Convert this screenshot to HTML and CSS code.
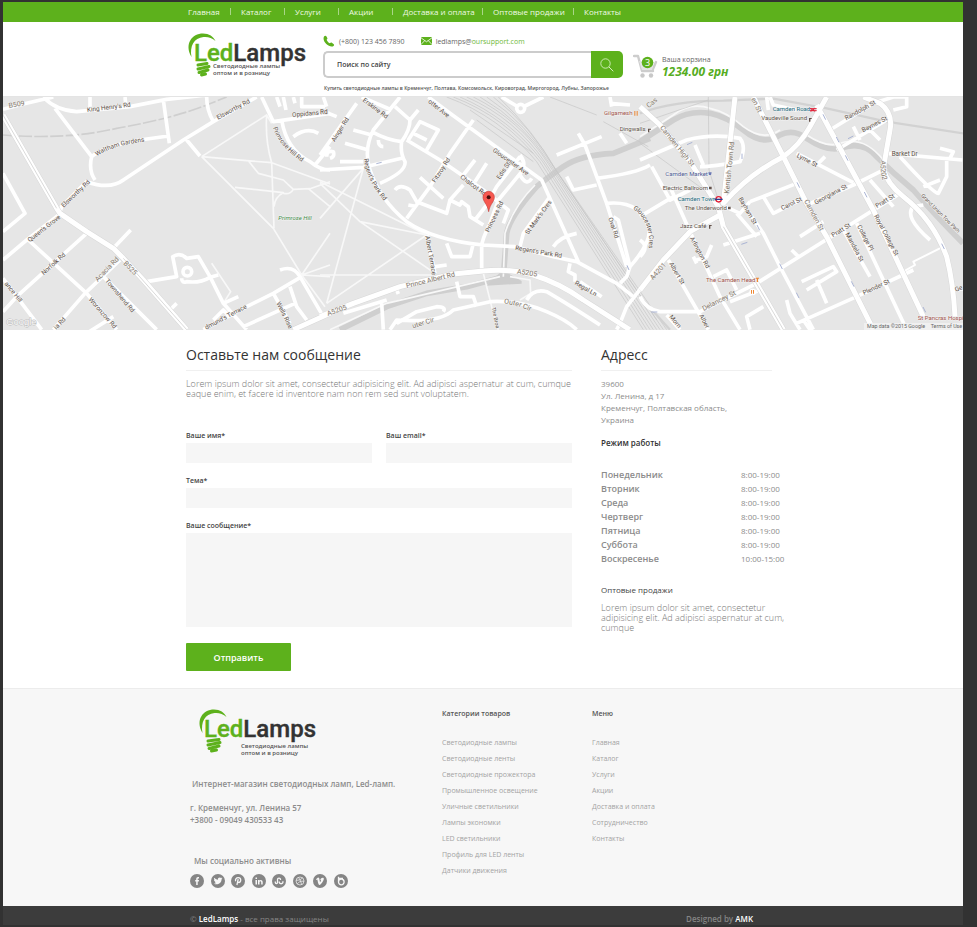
FILE: index.html
```html
<!DOCTYPE html>
<html lang="ru">
<head>
<meta charset="utf-8">
<title>LedLamps</title>
<link rel="stylesheet" href="styles.css">
</head>
<body>
<div class="site">
  <nav class="topnav">
    <ul class="wrap topnav-list">
      <li><a href="#">Главная</a></li>
      <li><a href="#">Каталог</a></li>
      <li><a href="#">Услуги</a></li>
      <li><a href="#">Акции</a></li>
      <li><a href="#">Доставка и оплата</a></li>
      <li><a href="#">Оптовые продажи</a></li>
      <li><a href="#">Контакты</a></li>
    </ul>
  </nav>

  <header class="header">
    <div class="wrap header-row">
      <a class="logo" href="#">
        <svg width="122" height="48" viewBox="0 0 122 48">
          <path fill="#5db11c" d="M4.500 24C-3 11 5 .5 16 .5c6 0 10.500 3 12.500 7.500C25 5 21 3.500 16.500 4 7 5 2.500 13 4.500 24z"/>
          <g fill="none" stroke="#5db11c" stroke-width="3" stroke-linecap="round"><path d="M11 32l9-1.500M11 36l11-2.500M12 39.500l9-2.500M14.500 42l4-1"/></g>
          <text class="logo-text" x="7" y="28"><tspan class="logo-led">Led</tspan>Lamps</text>
          <text class="logo-tag" x="26" y="35">Светодиодные лампы</text>
          <text class="logo-tag" x="26" y="42">оптом и в розницу</text>
        </svg>
      </a>
      <div class="header-mid">
        <div class="contacts">
          <span class="contact"><svg width="12" height="12" viewBox="0 0 12 12"><path fill="#5db11c" d="M1 1.500C2 .5 3 .6 3.500 1.500l.9 1.700c.3.700-.2 1-.8 1.500.6 1.600 1.700 2.800 3.300 3.600.6-.6 1-1 1.600-.7l2 1.300c.8.600.8 1.400 0 2C7 13.500-1.500 6.500 1 1.500z"/></svg>(+800) 123 456 7890</span>
          <span class="contact"><svg width="11" height="8" viewBox="0 0 11 8"><rect width="11" height="8" rx="1" fill="#5db11c"/><path d="M0 .8l5.500 4L11 .8M0 7.500l3.800-4M11 7.500l-3.800-4" fill="none" stroke="#fff" stroke-width=".8"/></svg><span>ledlamps@<a href="#">oursupport.com</a></span></span>
        </div>
        <form class="search">
          <input type="search" aria-label="Поиск по сайту" placeholder="Поиск по сайту">
          <button type="button" aria-label="Найти"><svg width="14" height="14" viewBox="0 0 14 14"><circle cx="5.500" cy="5.500" r="4.700" fill="none" stroke="#d6efc2" stroke-width=".9"/><path d="M9 9l4.300 4.300" stroke="#d6efc2" stroke-width="1"/></svg></button>
        </form>
        <p class="cities">Купить светодиодные лампы в Кременчуг, Полтава, Комсомольск, Кировоград, Миргогород, Лубны, Запорожье</p>
      </div>
      <div class="cart">
        <svg width="25" height="24" viewBox="0 0 25 24">
          <path d="M1 2h4l4 15h11M23 8l-3 7" fill="none" stroke="#cdcdcd" stroke-width="2.400" stroke-linejoin="round" stroke-linecap="round"/>
          <path d="M6 7l15 1-2 8H9z" fill="#e4e4e4"/>
          <circle cx="9.500" cy="21.500" r="2.200" fill="#c8c8c8"/><circle cx="18" cy="21.500" r="2.200" fill="#c8c8c8"/>
          <circle cx="14.500" cy="8.500" r="5.800" fill="#5db11c"/>
          <text class="cart-count" x="14.500" y="12">3</text>
        </svg>
        <div class="cart-info">
          <div class="cart-label">Ваша корзина</div>
          <div class="cart-sum">1234.00 грн</div>
        </div>
      </div>
    </div>
  </header>

  <section class="map">
    <svg viewBox="0 0 2880 699" preserveAspectRatio="xMidYMid slice" role="img" aria-label="Карта">
      <rect width="2880" height="699" fill="#e6e6e6"/>

      <!-- water -->
      <g class="canal">
        <path d="M1941 124L1831 169Q1731 174 1681 209Q1631 244 1601 269Q1521 359 1511 409L1501 539L1391 569L1271 589L1151 629L1011 698"/>
        <path d="M1911 134L2011 69Q2061 39 2121 49Q2171 59 2221 99Q2281 149 2331 114Q2371 94 2411 124Q2471 164 2511 154Q2581 129 2621 179Q2671 229 2731 279Q2791 349 2880 439"/>
      </g>
      <path d="M1470 545L1500 520L1556 552L1556 560L1450 566z" fill="#cdcdcd"/>

      <!-- park paths -->
      <g class="path" transform="translate(-9 -21)">
        <path d="M605 200L800 75L815 100M605 200L820 415L905 555M605 200L740 212L815 218L990 282M800 75Q795 150 815 218L822 415M745 212L775 250L850 270L880 298L930 296L990 275M705 292L850 308Q825 320 822 350M880 298Q870 315 850 310M925 296L990 350M905 555L990 430M905 555L990 525M905 555L990 560M905 555L975 650M635 520L692 605L670 640"/>
      </g>
      <g class="path" transform="translate(951 -21)">
        <path d="M0 275L320 435M130 235L0 385M0 280L120 395L345 550M320 435L120 395M320 435L20 640M130 235L20 640M0 555L345 555M485 530L515 650L535 719M550 560L555 430Q580 350 645 285M30 719L200 640L540 560M570 560L630 570L632 610L600 630"/>
      </g>
      <g class="path" transform="translate(1911 -21)"><path d="M0 140L100 75Q150 35 210 55Q260 65 310 110Q370 155 420 120M500 135Q560 175 600 160Q670 135 730 210"/></g>

      <!-- railways -->
      <g class="rail" transform="translate(951 -21)">
        <path d="M380 21Q540 80 650 215L970 719"/><path d="M400 21Q555 80 660 215L980 719"/><path d="M420 21Q570 85 668 215L990 719"/><path d="M440 21Q585 85 676 218L1000 719"/><path d="M460 21Q600 90 684 220L1010 719"/><path d="M480 21Q610 95 692 225L1020 719"/><path d="M500 21Q620 100 700 230L1030 719"/><path d="M520 21Q630 105 708 240L1040 719"/><path d="M535 21Q640 120 714 250L1010 690"/><path d="M450 60L640 190"/><path d="M470 90L640 215"/><path d="M690 21L830 75M850 95L985 170"/>
      </g>
      <g transform="translate(1911 -21)">
        <path class="track" d="M0 70Q100 32 250 32L400 26L560 55L740 95L980 132"/>
        <path class="rail" d="M205 21L207 240L235 330M0 160L220 320M0 100L205 30"/>
        <path class="track" d="M0 620L90 719"/>
      </g>
      <path class="rail-dash" d="M0 114Q191 129 341 94Q511 64 611 24L671 0"/>

      <!-- streets -->
      <g class="street" transform="translate(-9 -21)">
        <path d="M9 58L70 42L160 21M130 21Q165 60 230 65L390 50L500 28L620 15M165 55L275 200Q265 240 285 270M490 30L508 160M275 200Q310 170 420 150L505 138M180 365L185 350L260 275Q330 300 370 270L550 150L640 95L770 21M560 150L600 198M620 21Q620 60 640 95M9 250L75 370L9 425M180 372L80 450L9 510M85 450L260 610L350 719M260 430L50 620L9 665M340 475L392 420M9 565L125 719M360 510L255 610L160 719M310 560L470 719M260 730L340 680M440 575L530 560L518 500Q540 485 560 505L595 500L630 560L670 640L740 719M545 565Q545 580 560 575Q600 580 630 562L655 555M670 640L715 620M640 690L670 660L690 680M510 660L530 640M610 719L740 650L820 610L905 560M730 710L885 640M820 610L870 700M870 590L890 650L920 690M840 540Q880 525 900 560L970 680M785 21L820 95L990 70M845 90Q860 180 930 215Q960 240 990 240M880 140Q920 110 955 130M945 225L990 170M905 21L905 50L975 50M830 21L840 50M850 21L858 60M885 40L880 21M270 21L270 60M375 21L378 50"/>
        <circle cx="562" cy="545" r="13"/>
      </g>
      <g class="street" transform="translate(951 -21)">
        <path d="M325 21L390 70L665 270L775 515M240 21L160 120Q130 180 150 240Q180 330 260 395Q340 450 490 465L585 470L700 500L770 515L890 580L940 620M110 40L0 195M0 60L50 80M125 21L215 60M75 160L145 180M60 215L130 215M100 120L155 135M0 240L130 232L245 205M20 200Q20 180 40 185Q45 200 30 205M155 125Q200 150 245 155Q270 120 270 90L225 50M245 155Q240 190 255 215Q260 245 180 280M175 150q0 20 15 20M265 150L300 95L355 120L320 180M270 90L295 60M280 130L320 150M260 150L360 210L490 300L565 360L550 400M460 90L390 190L330 290L260 385M225 300Q240 280 270 300L290 335L380 370L390 330L430 285M300 262L370 325M265 345L290 350M465 210L430 255M500 220L465 275M600 200L530 290L500 345L465 390M390 330L420 345L425 335L445 350L450 380L490 405M600 195Q620 220 605 245L535 330L510 400Q485 450 485 470L485 545M600 255Q620 290 635 265M690 320L610 430L600 470M380 460L395 500L450 500L460 460M320 435L345 550M345 530L380 525M190 719L185 640M210 719L230 690Q360 700 400 660L510 635Q600 630 680 665Q740 690 770 719M620 630Q640 595 680 605Q740 640 840 705M410 575L420 620L460 620L470 650M70 670L200 630M230 600L235 612M230 700L290 665L350 650Q380 650 370 665M710 195L845 140M740 260L760 300L830 285M775 130L795 165L860 340L920 530M830 265Q950 250 990 225M860 340Q960 330 985 410Q1000 450 930 530L920 560L900 580M880 380L895 390L930 530M700 470Q720 440 770 430M750 520L745 545L765 555L765 575M780 575L845 620M990 560L920 650L900 700L890 719M545 21L590 48M615 48L670 21M870 40L930 45M870 21L875 50M920 160L900 130M10 21L20 50"/>
        <circle cx="602" cy="55" r="12"/>
      </g>
      <g class="street" transform="translate(1911 -21)">
        <path d="M470 190L640 278M330 335L470 280M370 320L400 370L480 330M500 345L640 285L740 235M570 120L700 40L760 21M590 180L740 90M740 190L967 210M920 200L920 260L895 310Q880 310 780 200M900 175L940 185L930 205M850 290L900 270M780 310L430 530L350 580L180 665L60 665Q20 660 0 620M90 290L150 425L240 620L300 719M85 510L205 719M470 700L650 620L820 540M610 420L690 560M650 400L800 719M0 210L140 150Q220 130 300 145Q320 170 300 215Q220 230 180 230M165 165L190 225M0 380L100 320M35 230L90 330L150 300M250 465L360 430M290 370L350 440M220 560L260 540L290 600M270 635L360 600M480 440L550 395M485 575L580 530L590 545L500 600M530 570L560 640M170 510L200 500L215 465M160 500L170 520M440 630L450 670L480 719M870 450Q790 380 820 350L850 345M945 600L980 595M455 480L475 500M640 110L660 150M690 120L720 150M760 21L800 21L800 50L760 60M390 21L400 45L470 60M535 220L555 200M690 270L760 350M255 350L300 370L330 335M300 330L370 430L420 530L520 719M330 719L320 680L370 650M380 21L385 60M80 675L120 719M490 690L510 719M0 450Q30 470 0 500"/>
        <path class="lane" d="M790 545L825 525L820 515L910 470"/>
      </g>

      <!-- main roads -->
      <g class="casing">
        <path d="M0 54L161 334L171 349L251 404L331 454L361 484L421 549L551 698M871 698L981 649"/>
        <path d="M951 659L1051 619L1191 569L1351 531L1441 522Q1521 514 1591 534Q1671 559 1741 609L1851 679L1880 698"/>
        <path d="M1911 29L1971 84L2061 194L2146 329L2161 389L2341 698M2196 0L2161 319Q2241 229 2341 179Q2391 144 2421 89L2471 0M2251 0L2341 179L2411 319L2471 419L2611 698M2441 24L2611 339L2761 659M2581 0L2631 19Q2671 49 2661 99L2641 214Q2651 259 2701 299Q2791 369 2831 479Q2851 559 2856 659M2151 354L2061 404L1981 489L1911 579"/>
      </g>
      <g class="road">
        <path d="M0 54L161 334L171 349L251 404L331 454L361 484L421 549L551 698M871 698L981 649"/>
        <path d="M951 659L1051 619L1191 569L1351 531L1441 522Q1521 514 1591 534Q1671 559 1741 609L1851 679L1880 698"/>
        <path d="M1911 29L1971 84L2061 194L2146 329L2161 389L2341 698M2196 0L2161 319Q2241 229 2341 179Q2391 144 2421 89L2471 0M2251 0L2341 179L2411 319L2471 419L2611 698M2441 24L2611 339L2761 659M2581 0L2631 19Q2671 49 2661 99L2641 214Q2651 259 2701 299Q2791 369 2831 479Q2851 559 2856 659M2151 354L2061 404L1981 489L1911 579"/>
      </g>
      <path class="rail" d="M0 54L161 334M361 484L551 698M2161 389L2341 698"/>

      <!-- street names -->
      <defs>
        <path id="primrose" d="M810 92Q825 150 925 215"/>
        <path id="regents" d="M1083 185Q1090 255 1155 325"/>
        <path id="waltham" d="M282 178Q330 142 445 132"/>
        <path id="cres" d="M1890 335Q1955 380 1933 480"/>
        <path id="outer" d="M1503 620Q1545 622 1605 655"/>
        <path id="a5202" d="M2634 190Q2630 220 2640 255"/>
      </defs>
      <g class="name">
        <text><textPath href="#primrose">Primrose Hill Rd</textPath></text>
        <text><textPath href="#regents">Regent's Park Rd</textPath></text>
        <text><textPath href="#waltham">Waltham Gardens</textPath></text>
        <text><textPath href="#cres">Gloucester Cres</textPath></text>
        <text transform="translate(253 45) rotate(-7)">King Henry's Rd</text>
        <text transform="translate(645 68) rotate(-28)">Elsworthy Rd</text>
        <text transform="translate(868 60) rotate(-5)">Oppidans Rd</text>
        <text transform="translate(182 332) rotate(-43)">Elsworthy Rd</text>
        <text transform="translate(80 436) rotate(-38)">Queen's Grove</text>
        <text transform="translate(122 535) rotate(-42)">Norfolk Rd</text>
        <text transform="translate(4 560) rotate(52)">ance Hill</text>
        <text transform="translate(306 552) rotate(50)">Townshend Rd</text>
        <text transform="translate(256 608) rotate(49)">Woronzow Rd</text>
        <text transform="translate(160 698) rotate(-46)">ia Rd</text>
        <text transform="translate(610 698) rotate(-28)">dmund's Terrace</text>
        <text transform="translate(820 618) rotate(64)">Wells Rise</text>
        <text transform="translate(951 50)">Rd</text>
        <text transform="translate(1078 12) rotate(37)">Erskine Rd</text>
        <text transform="translate(1274 16) rotate(38)">otter Ave</text>
        <text transform="translate(995 136) rotate(-58)">Ainger Rd</text>
        <text transform="translate(1297 258) rotate(-57)">Fitzroy Rd</text>
        <text transform="translate(1370 242) rotate(37)">Chalcot Rd</text>
        <text transform="translate(1468 163) rotate(35)">Gloucester Ave</text>
        <text transform="translate(1490 248) rotate(-56)">Edis St</text>
        <text transform="translate(1458 407) rotate(-64)">Princess Rd</text>
        <text transform="translate(1576 413) rotate(-54)">St Mark's Cres</text>
        <text transform="translate(1536 458) rotate(10)">Regent's Park Rd</text>
        <text transform="translate(1267 418) rotate(80)">Albert Terrace</text>
        <text transform="translate(1714 562) rotate(30)">Regal Ln</text>
        <text transform="translate(1816 364) rotate(72)">Oval Rd</text>
        <text transform="translate(1466 632) rotate(78)" class="small">The Broa</text>
        <text transform="translate(2380 180) rotate(27)">Lyme St</text>
        <text transform="translate(2530 70) rotate(-29)">Randolph St</text>
        <text transform="translate(2580 106) rotate(-27)">Baynes St</text>
        <text transform="translate(2666 177)">Barket Dr</text>
        <text transform="translate(2338 340) rotate(-26)">Carol St</text>
        <text transform="translate(2438 323) rotate(-28)">Georgiana St</text>
        <text transform="translate(2206 305) rotate(60)">Bayham St</text>
        <text transform="translate(2622 333) rotate(-31)">Pratt St</text>
        <text transform="translate(2490 421) rotate(-31)">Pratt St</text>
        <text transform="translate(2527 411) rotate(62)">Mandela St</text>
        <text transform="translate(2562 388) rotate(62)">College Pl</text>
        <text transform="translate(2613 357) rotate(62)">Royal College St</text>
        <text transform="translate(2583 594) rotate(-25)">Plender St</text>
        <text transform="translate(2060 424) rotate(61)">Arlington Rd</text>
        <text transform="translate(1998 500) rotate(60)">Albert St</text>
        <text transform="translate(2088 656) rotate(62)">Alber</text>
        <text transform="translate(1998 660) rotate(50)">Morn</text>
        <text transform="translate(2753 297) rotate(45)" class="small">Grand Union Tow Path</text>
        <text transform="translate(2858 584) rotate(-20)">Ge</text>
      </g>
      <g class="name major">
        <text transform="translate(18 33) rotate(-10)">B509</text>
        <text transform="translate(284 555) rotate(-46)">Acacia Rd</text>
        <text transform="translate(360 500) rotate(46)">B525</text>
        <text transform="translate(975 657) rotate(-20)">A5205</text>
        <text transform="translate(1211 574) rotate(-14)">Prince Albert Rd</text>
        <text transform="translate(1541 530) rotate(8)">A5205</text>
        <text transform="translate(1230 694) rotate(-17)">uter Cir</text>
        <text><textPath href="#outer">Outer Cir</textPath></text>
        <text transform="translate(1970 92) rotate(51)">Camden High St</text>
        <text transform="translate(2178 290) rotate(-84)">Kentish Town Rd</text>
        <text transform="translate(2403 312) rotate(62)">Camden St</text>
        <text transform="translate(2244 6) rotate(64)">en St</text>
        <text><textPath href="#a5202">A5202</textPath></text>
        <text transform="translate(1950 550) rotate(-48)">A4201</text>
        <text transform="translate(2102 642) rotate(-27)">Delancey St</text>
        <text transform="translate(1937 34) rotate(-40)">Cas</text>
      </g>

      <!-- places -->
      <g class="name place">
        <text class="park" x="826" y="368">Primrose Hill</text>
        <text class="food" x="1803" y="55">Gilgamesh</text>
        <text x="1850" y="102">Dingwalls</text>
        <text class="transit" x="2309" y="43">Camden Road</text>
        <text x="2275" y="70">Vaudeville Sound</text>
        <text class="shop" x="1987" y="237">Camden Market</text>
        <text x="1979" y="280">Electric Ballroom</text>
        <text class="transit" x="2024" y="313">Camden Town</text>
        <text x="2045" y="340">The Underworld</text>
        <text x="2031" y="392">Jazz Café</text>
        <text class="food" x="2109" y="556">The Camden Head</text>
        <text class="food" x="2744" y="668">St Pancras Hospi</text>
      </g>
      <g fill="#ee8834"><path d="M1894 42h3v14h-3zM1901 42h3v14h-3zM2258 542h10v3h-10zM2261 545h4v10h-4z"/><circle cx="2249" cy="585" r="10" fill="#fff"/><path d="M2244 579h3v11h-3zM2250 579h3v11h-3z"/></g>
      <g fill="#65534b"><path d="M1935 95h9v3h-5v8h-4zM2418 63h8v3h-4v8h-4zM2118 384h8v3h-4v8h-4zM2118 269h8v8h-8zM2175 329h8v8h-8z"/></g>
      <path d="M2116 226h10l-2 8h-6z" fill="#6b79b5"/>
      <circle cx="2147" cy="307" r="8" fill="#fff" stroke="#e22137" stroke-width="4"/><path d="M2135 305h24v4h-24z" fill="#2b3c8d"/>
      <path d="M2423 35l12 8M2423 43l12-8M2421 35h20M2421 41h20" stroke="#e22137" stroke-width="3" fill="none"/>
      <g class="arrow"><path d="M1120 200l16-4M2052 143l16-7M2217 170v16M2382 256l8 16M2460 52l8 16M2500 120l8 16M2527 175l8 16M2584 285l8 16M2262 384l8 16M2215 442l18-6M2330 500l8 16M2380 587l8 16M2545 553l8 16M2760 630l8 16M2816 440l8 16M1872 505l6 14M2535 125l16-8M1945 645h18"/></g>

      <path d="M1457 344C1453 320 1440 315 1440 300a17 17 0 0 1 34 0C1474 315 1461 320 1457 344z" fill="#f75850" stroke="#c5403b" stroke-width="2"/>
      <circle cx="1457" cy="301" r="6" fill="#4a0f0c"/>

      <text class="google" x="10" y="685">Google</text>
      <rect x="2583" y="678" width="297" height="21" fill="#f2f2f2" opacity=".8"/>
      <text class="credit" x="2592" y="694">Map data ©2015 Google</text>
      <text class="credit" x="2783" y="694">Terms of Use</text>
    </svg>
  </section>

  <main class="wrap main">
    <section class="message">
      <h2>Оставьте нам сообщение</h2>
      <p class="lead">Lorem ipsum dolor sit amet, consectetur adipisicing elit. Ad adipisci aspernatur at cum, cumque eaque enim, et facere id inventore nam non rem sed sunt voluptatem.</p>
      <form class="form">
        <div class="form-pair">
          <div class="field"><label for="name">Ваше имя*</label><input id="name" type="text"></div>
          <div class="field"><label for="email">Ваш email*</label><input id="email" type="email"></div>
        </div>
        <div class="field"><label for="topic">Тема*</label><input id="topic" type="text"></div>
        <div class="field"><label for="msg">Ваше сообщение*</label><textarea id="msg"></textarea></div>
        <button class="submit" type="button">Отправить</button>
      </form>
    </section>
    <aside class="address">
      <h2>Адресс</h2>
      <address>39600<br>Ул. Ленина, д 17<br>Кременчуг, Полтавская область,<br>Украина</address>
      <h3>Режим работы</h3>
      <table class="hours">
        <tr><th scope="row">Понедельник</th><td>8:00-19:00</td></tr>
        <tr><th scope="row">Вторник</th><td>8:00-19:00</td></tr>
        <tr><th scope="row">Среда</th><td>8:00-19:00</td></tr>
        <tr><th scope="row">Чертверг</th><td>8:00-19:00</td></tr>
        <tr><th scope="row">Пятница</th><td>8:00-19:00</td></tr>
        <tr><th scope="row">Суббота</th><td>8:00-19:00</td></tr>
        <tr><th scope="row">Воскресенье</th><td>10:00-15:00</td></tr>
      </table>
      <h4>Оптовые продажи</h4>
      <p class="lead">Lorem ipsum dolor sit amet, consectetur adipisicing elit. Ad adipisci aspernatur at cum, cumque</p>
    </aside>
  </main>

  <footer class="footer">
    <div class="wrap footer-row">
      <div class="about">
        <a class="logo" href="#">
          <svg width="122" height="50" viewBox="0 0 122 50">
            <path fill="#5db11c" d="M4.500 24C-3 11 5 .5 16 .5c6 0 10.500 3 12.500 7.500C25 5 21 3.500 16.500 4 7 5 2.500 13 4.500 24z"/>
            <g fill="none" stroke="#5db11c" stroke-width="3" stroke-linecap="round"><path d="M10 32l11-1.500M10 36l12-2.500M11 39.500l10-2.500M13.500 42l5-1"/></g>
            <text class="logo-text" x="6" y="28"><tspan class="logo-led">Led</tspan>Lamps</text>
            <text class="logo-tag" x="43" y="39">Светодиодные лампы</text>
            <text class="logo-tag" x="43" y="46">оптом и в розницу</text>
          </svg>
        </a>
        <p class="slogan">Интернет-магазин светодиодных ламп, Led-ламп.</p>
        <p class="place-info">г. Кременчуг, ул. Ленина 57<br>+3800 - 09049 430533 43</p>
        <p class="social-title">Мы социально активны</p>
        <ul class="social">
          <li><a href="#" aria-label="Facebook"><svg viewBox="0 0 14 14"><circle cx="7" cy="7" r="7"/><path class="fg" d="M6.200 11V7.400H5.200V6h1V5.100C6.200 3.700 7 3 8 3h1v1.400h-.7c-.5 0-.6.3-.6.7V6H9L8.800 7.400H7.700V11z"/></svg></a></li>
          <li><a href="#" aria-label="Twitter"><svg viewBox="0 0 14 14"><circle cx="7" cy="7" r="7"/><path class="fg" d="M3.200 3.800c1 1.200 2.200 1.800 3.700 1.900-.3-2 2-3 3.200-1.700l1.200-.4-.8 1 .9-.1-.9 1c.1 4-4.300 6-7.700 4.200 1 0 1.800-.2 2.500-.7-.8-.1-1.400-.6-1.600-1.300h.7C3.500 7.300 3 6.700 3 5.800l.7.200C3 5.400 2.800 4.600 3.200 3.800z"/></svg></a></li>
          <li><a href="#" aria-label="Pinterest"><svg viewBox="0 0 14 14"><circle cx="7" cy="7" r="7"/><path class="ln" d="M7.200 5.200L5.900 11M4.800 7.300C3.800 5.500 5.200 3.600 7.300 3.600c3.300 0 3 4.700.4 4.900-.6 0-1-.3-1.200-.7"/></svg></a></li>
          <li><a href="#" aria-label="LinkedIn"><svg viewBox="0 0 14 14"><circle cx="7" cy="7" r="7"/><path class="fg" d="M3.500 6H5v4.500H3.500zM3.500 3.600H5V5H3.500zM6 6h1.400v.6C8.300 5.400 10.700 5.700 10.700 8v2.500H9.200V8.200c0-1.300-1.700-1.300-1.700 0v2.300H6z"/></svg></a></li>
          <li><a href="#" aria-label="StumbleUpon"><svg viewBox="0 0 14 14"><circle cx="7" cy="7" r="7"/><path class="ln" d="M3.300 7.400v1c0 1.500 2.200 1.500 2.200 0V5.500c0-1.900 3-1.900 3 0v.6M7.300 7.400v1.200c0 1.500 3.600 1.500 3.600 0V7.300"/></svg></a></li>
          <li><a href="#" aria-label="Dribbble"><svg viewBox="0 0 14 14"><circle cx="7" cy="7" r="7"/><path class="thin" d="M3 7a4 4 0 1 0 8 0a4 4 0 1 0-8 0M5.500 3.400Q8 6.500 8.600 10.600M3.200 6.400Q7 6.600 9.600 4M4.300 9.900Q6.500 6.500 11 7.300"/></svg></a></li>
          <li><a href="#" aria-label="Vimeo"><svg viewBox="0 0 14 14"><circle cx="7" cy="7" r="7"/><path class="fg" d="M3 5.200L5 3.600c1.800-.3 1.400 3 2.100 4.500C8 7 8.500 5.700 7.300 6c.4-2.600 3.900-3.200 3.500-.8-.4 2-2.500 4.900-4 5.700C5 11.300 4.900 7.200 4.300 5.600l-.9.400z"/></svg></a></li>
          <li><a href="#" aria-label="Behance"><svg viewBox="0 0 14 14"><circle cx="7" cy="7" r="7"/><path class="ln" d="M4.500 2.800V8M4.500 4.500h4.500M4.500 8a2.800 2.800 0 1 0 5.600 0a2.800 2.800 0 1 0-5.600 0"/></svg></a></li>
        </ul>
      </div>
      <div class="links">
        <h5>Категории товаров</h5>
        <ul>
          <li><a href="#">Светодиодные лампы</a></li>
          <li><a href="#">Светодиодные ленты</a></li>
          <li><a href="#">Светодиодные прожектора</a></li>
          <li><a href="#">Промышленное освещение</a></li>
          <li><a href="#">Уличные светильники</a></li>
          <li><a href="#">Лампы экономки</a></li>
          <li><a href="#">LED светильники</a></li>
          <li><a href="#">Профиль для LED ленты</a></li>
          <li><a href="#">Датчики движения</a></li>
        </ul>
      </div>
      <div class="links">
        <h5>Меню</h5>
        <ul>
          <li><a href="#">Главная</a></li>
          <li><a href="#">Каталог</a></li>
          <li><a href="#">Услуги</a></li>
          <li><a href="#">Акции</a></li>
          <li><a href="#">Доставка и оплата</a></li>
          <li><a href="#">Сотрудничество</a></li>
          <li><a href="#">Контакты</a></li>
        </ul>
      </div>
    </div>
  </footer>
  <div class="bottom">
    <div class="wrap bottom-row">
      <span>© <b>LedLamps</b> - все права защищены</span>
      <span class="by">Designed by <b>AMK</b></span>
    </div>
  </div>
</div>
</body>
</html>
```
FILE: styles.css
```css
* { box-sizing: border-box; }
body {
  margin: 0;
  padding: 2px 14px 2px 3px;
  background: #323232;
  font-family: "Open Sans", "Noto Sans", sans-serif;
  font-size: 8px;
  color: #8c8c8c;
}
ul, p, h2, h3, h4, h5 { margin: 0; padding: 0; }
ul { list-style: none; }
a { color: inherit; text-decoration: none; }
svg { display: block; }
input, textarea, button { font: inherit; border: 0; border-radius: 0; padding: 0; margin: 0; }
.site { background: #fff; }
.wrap { max-width: 606px; margin: 0 auto; padding-left: 6px; }

.topnav { background: #5db11c; color: #eefae5; }
.topnav-list { display: grid; grid-template-columns: 42px 54px 54px 54px 90px 91px auto; align-items: center; height: 20px; padding: 0 0 2px 8px; white-space: nowrap; }
.topnav-list li { display: flex; align-items: center; gap: 10px; }
.topnav-list li + li::before { content: ""; width: 1px; height: 7px; background: #a9d688; }

.header { height: 75px; border-bottom: 1px solid #e4e4e4; }
.header-row { display: flex; align-items: flex-start; }
.logo { display: block; }
.header .logo { margin: 11px 2px 0 1px; }
.logo svg { overflow: visible; }
.logo-text { font-family: Roboto, sans-serif; font-size: 24px; font-weight: 500; fill: #333; stroke: #333; stroke-width: .4; }
.logo-led { fill: #5db11c; stroke: #5db11c; }
.logo-tag { font-size: 6px; font-weight: 600; fill: #555; }
.header-mid { width: 300px; margin: 13px 0 0 12px; white-space: nowrap; }
.contacts { display: flex; gap: 16px; height: 12px; font-size: 7px; color: #666; align-items: center; }
.contact { display: flex; align-items: center; gap: 4px; }
.contact a { color: #6fb93a; }
.search { display: flex; height: 27px; margin-top: 4px; }
.search input { flex: 1; min-width: 0; background: #fff; border: 2px solid #ccc; border-right: 0; border-radius: 5px 0 0 5px; padding: 0 12px; font-size: 7px; font-weight: 600; outline: 0; }
.search input::placeholder { color: #444; opacity: 1; }
.search button { width: 32px; background: #5db11c; border-radius: 0 5px 5px 0; display: grid; place-items: center; }
.cities { margin-top: 6px; padding-left: 1px; font-size: 5px; line-height: 8px; font-weight: 600; color: #555; }
.cart { display: flex; gap: 4px; margin: 32px 0 0 10px; white-space: nowrap; }
.cart-info { padding-top: 1px; }
.cart-count { font-size: 9px; fill: #fff; text-anchor: middle; }
.cart-label { font-size: 7px; line-height: 10px; color: #666; }
.cart-sum { font-size: 12px; line-height: 14px; font-weight: 700; font-style: italic; color: #56ad1f; }

.map svg { width: 100%; height: 233px; }
.street, .road, .casing, .path, .canal, .rail, .rail-dash, .track, .arrow, .lane { fill: none; stroke-linejoin: round; }
.street { stroke: #fff; stroke-width: 11; }
.lane { stroke-width: 6; }
.road { stroke: #fff; stroke-width: 15; }
.casing { stroke: #d8d8d8; stroke-width: 18; }
.path { stroke: #f8f8f8; stroke-width: 5; }
.canal { stroke: #cfcfcf; stroke-width: 17; }
.rail { stroke: #c6c6c6; stroke-width: 2; }
.rail-dash { stroke: #cfcfcf; stroke-width: 5; stroke-dasharray: 40 7; }
.track { stroke: #d2d2d2; stroke-width: 7; }
.arrow { stroke: #aab4d4; stroke-width: 3; }
.name { font-family: Roboto, sans-serif; font-size: 19px; fill: #5d5148; stroke: #f3f3f3; stroke-width: 3; paint-order: stroke; }
.major { font-size: 21px; fill: #85796c; }
.place { font-size: 18px; }
.small { font-size: 16px; }
.park { fill: #3f8a46; font-style: italic; }
.food { fill: #a0524a; }
.transit { fill: #206a7d; }
.shop { fill: #4d5a92; }
.google { font-family: "Liberation Sans", sans-serif; font-size: 28px; fill: #fafafa; stroke: #bdbdbd; stroke-width: 3; paint-order: stroke; }
.credit { font-family: Roboto, sans-serif; font-size: 16px; fill: #666; }

.main { display: grid; grid-template-columns: minmax(0, 386px) minmax(0, 185px); gap: 29px; padding-top: 15px; padding-bottom: 17px; }
h2 { font-size: 14px; line-height: 20px; font-weight: 500; color: #333; padding-bottom: 5px; border-bottom: 1px solid #f0f0f0; white-space: nowrap; }
.address h2 { margin-right: 14px; }
.lead { font-size: 9px; line-height: 10px; font-weight: 300; color: #777; }
.message .lead { margin-top: 8px; }
.form { display: flex; flex-direction: column; gap: 11px; margin-top: 30px; }
.form-pair { display: grid; grid-template-columns: 1fr 1fr; gap: 14px; }
.field label { display: block; font-size: 7px; line-height: 14px; font-weight: 600; color: #444; }
.field input, .field textarea { display: block; width: 100%; height: 20px; background: #f6f6f6; resize: none; outline: 0; }
.field textarea { height: 94px; }
.submit { width: 105px; height: 28px; margin-top: 5px; border-radius: 1px; background: #5db11c; color: #fff; font-size: 9px; font-weight: 600; }
address { margin-top: 7px; font-style: normal; font-size: 8px; line-height: 12px; white-space: nowrap; }
h3 { margin-top: 11px; font-size: 8px; line-height: 12px; font-weight: 600; color: #333; }
.hours { margin-top: 19px; width: 100%; border-collapse: collapse; }
.hours th, .hours td { padding: 0; height: 14px; line-height: 14px; text-align: left; }
.hours th { width: 140px; font-size: 9px; font-weight: 600; }
h4 { margin-top: 18px; font-size: 8px; line-height: 12px; font-weight: 400; color: #444; }
.address .lead { margin-top: 7px; }

.footer { background: #f7f7f7; border-top: 1px solid #ececec; height: 218px; }
.footer-row { display: grid; grid-template-columns: 256px 150px auto; padding-top: 20px; }
.about { font-weight: 600; white-space: nowrap; padding-left: 4px; }
.footer .logo { margin-left: 8px; }
.slogan { margin-top: 19px; padding-left: 2px; line-height: 12px; }
.place-info { margin-top: 12px; line-height: 12px; }
.social-title { margin-top: 29px; padding-left: 4px; line-height: 12px; }
.social { display: flex; justify-content: space-between; width: 158px; margin-top: 7px; }
.social svg { width: 14px; height: 14px; fill: #858585; }
.social .fg { fill: #f7f7f7; }
.social .ln { fill: none; stroke: #f7f7f7; stroke-width: 1.3; }
.social .thin { fill: none; stroke: #f7f7f7; stroke-width: .7; }
.links { white-space: nowrap; font-size: 7px; color: #a3a3a3; }
h5 { font-size: 7px; line-height: 10px; font-weight: 600; color: #555; }
.links ul { margin-top: 15px; }
.links li { display: flex; align-items: center; height: 16px; }

.bottom { background: #3c3c3c; }
.bottom-row { display: flex; justify-content: space-between; align-items: center; height: 19px; padding: 5px 33px 0 10px; color: #858585; }
.bottom b { color: #fff; font-weight: 600; }
.by { font-weight: 600; }
```
